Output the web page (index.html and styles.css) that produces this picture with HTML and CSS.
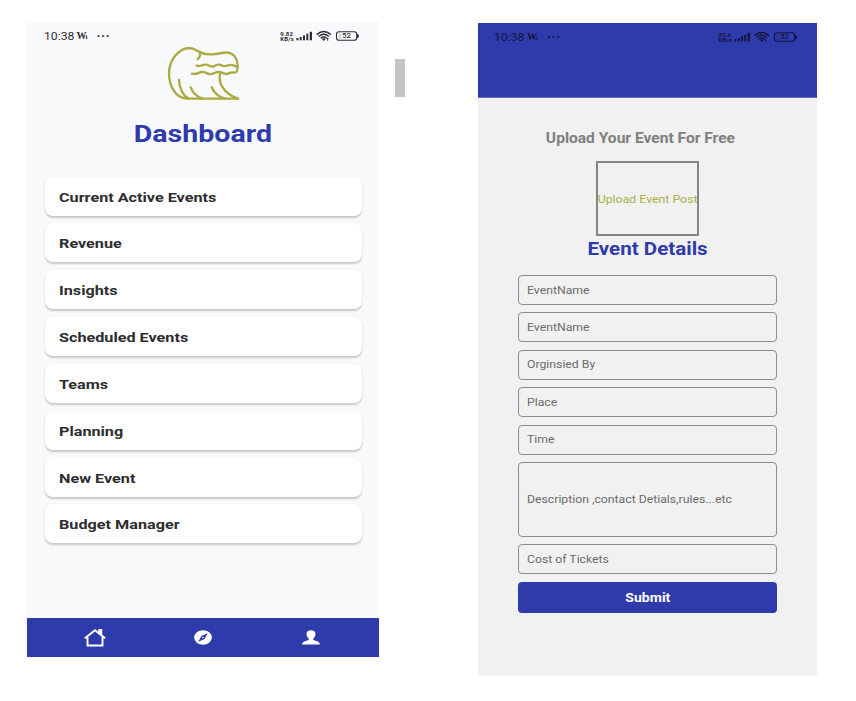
FILE: index.html
```html
<!DOCTYPE html>
<html lang="en">
<head>
<meta charset="utf-8">
<title>Event Manager</title>
<link rel="stylesheet" href="styles.css">
</head>
<body>
<svg class="defs" aria-hidden="true">
  <symbol id="status-icons" viewBox="0 0 62 12">
    <g fill="currentColor">
      <rect x="-.6" y="8" width="2" height="2.300"/><rect x="2.700" y="7" width="2" height="3.300"/><rect x="6" y="5.400" width="2" height="4.900"/><rect x="9.300" y="3.700" width="2" height="6.600"/><rect x="12.700" y="1.800" width="2.300" height="8.500"/>
      <path d="M25 8.900 26.800 11 28.600 8.900Q26.800 7.800 25 8.900ZM29.500 9l1.200-1.300L31.900 9H31.200V10.800H30.200V9ZM60 4.200h.7q1.100 0 1.100.8v2.100q0 .8-1.100.8h-.7z"/>
      <rect x="41.500" y="3" width="2.800" height="6" opacity=".15"/>
    </g>
    <g fill="none" stroke="currentColor" stroke-width="1.450">
      <path d="M19.700 4.600Q26.800-1.700 33.900 4.600M21.700 6.500Q26.800 2.200 31.900 6.500M23.700 8.200Q26.800 5.700 29.900 8.200"/>
    </g>
    <rect x="39.500" y="1.700" width="20.200" height="8.600" rx="2.600" fill="none" stroke="currentColor" stroke-width="1.100"/>
  </symbol>
</svg>
<main class="board">
  <section class="phone dashboard">
    <div class="status">
      <span class="clock">10:38</span><span class="carrier">W<small>i</small></span><span class="dots">···</span>
      <span class="speed">9.82<br>KB/s</span>
      <span class="signals"><svg><use href="#status-icons"/></svg><b>52</b></span>
    </div>
    <svg class="logo" viewBox="0 0 270 210" fill="none" stroke="#adaa42" stroke-width="7" stroke-linecap="round" stroke-linejoin="round">
      <path d="M234 176H80C45 174 27 136 27 98 28 60 55 25 88 24 103 24 110 33 121 37 142 46 165 44 185 39 216 32 232 50 233 78 233 90 231 98 224 98 212 94 208 102 198 102 188 101 184 95 174 96 163 97 159 104 148 102 138 100 135 94 124 96 112 99 108 104 96 101"/>
      <path d="M110 77C120 80 128 73 137 74 148 75 152 82 162 79 171 73 178 72 186 77 199 82 207 72 217 75 223 77 227 80 232 79M180 101C175 125 187 160 234 176M121 37C121 48 118 54 113 58M57 120C58 145 70 168 86 176M92 142C98 158 110 170 128 176M155 142C162 158 172 170 195 176"/>
    </svg>
    <h1><span>Dashboard</span></h1>
    <ul class="menu">
      <li><span>Current Active Events</span></li>
      <li><span>Revenue</span></li>
      <li><span>Insights</span></li>
      <li><span>Scheduled Events</span></li>
      <li><span>Teams</span></li>
      <li><span>Planning</span></li>
      <li><span>New Event</span></li>
      <li><span>Budget Manager</span></li>
    </ul>
    <nav class="tabs">
      <svg viewBox="0 0 22 18" fill="none" stroke="#fff" stroke-width="1.900"><path d="M.8 9.200 11 1.300 21.200 9.200M3.500 8V16.500H18.500V8M15.300 4V1H17.300V6"/></svg>
      <svg viewBox="0 0 22 18"><ellipse cx="11" cy="8.500" rx="8.800" ry="7.300" fill="#fff"/><path d="M15.800 4.300 12.600 9.900 6.200 12.700 9.400 7.100Z" fill="#303bab"/><ellipse cx="11" cy="8.500" rx=".9" ry=".7" fill="#fff"/></svg>
      <svg viewBox="0 0 22 18" fill="#fff"><path d="M11 1.200C13.800 1.200 15.600 2.700 15.500 5 15.400 7.300 14.400 8.700 13.300 9.500V11C14.900 12 19.800 11.900 19.900 15.400H2.100C2.200 11.900 7.100 12 8.700 11V9.500C7.600 8.700 6.600 7.300 6.500 5 6.400 2.700 8.200 1.200 11 1.200Z"/></svg>
    </nav>
  </section>
  <div class="marker"></div>
  <section class="phone upload">
    <header>
      <div class="status">
        <span class="clock">10:38</span><span class="carrier">W<small>i</small></span><span class="dots">···</span>
        <span class="speed">35.0<br>KB/s</span>
        <span class="signals"><svg><use href="#status-icons"/></svg><b>52</b></span>
      </div>
    </header>
    <h2><span>Upload Your Event For Free</span></h2>
    <div class="poster"><span>Upload Event Post</span></div>
    <h3><span>Event Details</span></h3>
    <form class="fields">
      <div class="field"><span>EventName</span></div>
      <div class="field"><span>EventName</span></div>
      <div class="field"><span>Orginsied By</span></div>
      <div class="field"><span>Place</span></div>
      <div class="field"><span>Time</span></div>
      <div class="field tall"><span>Description ,contact Detials,rules...etc</span></div>
      <div class="field"><span>Cost of Tickets</span></div>
      <button type="button"><span>Submit</span></button>
    </form>
  </section>
</main>
</body>
</html>
```
FILE: styles.css
```css
* { box-sizing: border-box; }
body {
  margin: 0;
  background: #fff;
  font-family: Roboto, "Liberation Sans", sans-serif;
}
.defs { display: none; }
.board {
  display: flex;
  align-items: flex-start;
  width: 856px;
  height: 701px;
  padding: 22px 0 0 27px;
}
.phone { display: flex; flex-direction: column; flex: none; }

/* Labels use a widened Roboto */
h1 span, h2 span, h3 span, li span, .poster span, .field span, button span, .clock {
  display: inline-block;
  white-space: nowrap;
  transform: scaleX(var(--stretch, 1.1));
}
li span, .field span, .clock { transform-origin: left; }

.status {
  display: flex;
  align-items: center;
  height: 14px;
  color: #2d2f33;
}
.clock { --stretch: 1.09; width: 33px; padding-top: 1px; font-size: 11.200px; line-height: 14px; }
.carrier { width: 20px; font: bold 10px/12px "Liberation Serif", serif; letter-spacing: -1px; }
.carrier small { font-size: 7px; }
.dots { font-size: 13px; line-height: 14px; font-weight: bold; letter-spacing: .7px; }
.speed { margin-left: auto; font-size: 6px; line-height: 5.500px; font-weight: bold; letter-spacing: .2px; }
.signals { position: relative; width: 62px; height: 12px; margin-left: 3px; }
.signals svg { display: block; width: 62px; height: 12px; overflow: visible; }
.signals b { position: absolute; left: 40px; top: 2px; width: 19px; text-align: center; font-size: 7.500px; line-height: 8px; font-weight: 500; }
symbol { overflow: visible; }

.dashboard { width: 352px; height: 635px; background: #f8f9fb; }
.dashboard .status { margin: 7px 20px 0 16.500px; }
.logo { width: 90px; height: 70px; margin: -3px 0 0 133px; }
h1 {
  --stretch: 1.215;
  margin: 9px 0 0;
  text-align: center;
  font-size: 23.5px;
  line-height: 30px;
  color: #303bab;
}
.menu {
  display: flex;
  flex-direction: column;
  gap: 7.850px;
  margin: 27.500px 17.500px 0;
  padding: 0;
  list-style: none;
}
.menu li {
  --stretch: 1.2;
  height: 39px;
  padding-left: 14px;
  border-radius: 8px;
  background: #fff;
  box-shadow: 0 1.500px 2px rgba(0, 0, 0, .2);
  font-size: 13.500px;
  font-weight: bold;
  line-height: 40px;
  color: #2d2d2f;
}
.tabs {
  display: flex;
  align-items: center;
  justify-content: space-around;
  height: 39px;
  margin-top: auto;
  padding: 0 13.500px;
  background: #303bab;
}
.tabs svg { width: 22px; height: 18px; }

.marker { width: 10px; height: 38px; margin: 37px 0 0 16px; background: #c6c6c6; }

.upload {
  align-items: center;
  width: 339px;
  height: 653px;
  margin: 1px 0 0 73px;
  background: #f1f1f1;
}
.upload header { width: 100%; height: 75px; padding: 7px 20px 0 16px; background: #303bab; border-bottom: 1px solid #5e67bd; }
.upload .status { color: #11143d; }
h2 { --stretch: 1.12; margin: 29.500px 0 0; padding-right: 14px; font-size: 13.900px; line-height: 20px; color: #808080; }
.poster {
  display: flex;
  align-items: center;
  justify-content: center;
  width: 103px;
  height: 75px;
  margin: 13.500px 0 0;
  border: 2px solid #858585;
  font-size: 11.500px;
  color: #adaf48;
}
.poster span { --stretch: 1.07; }
h3 { --stretch: 1.1; margin: 0; font-size: 18.700px; line-height: 26px; color: #303bab; }
.fields { display: flex; flex-direction: column; gap: 7.400px; width: 259px; margin: 13px 0 0; }
.field {
  --stretch: 1.088;
  display: flex;
  align-items: center;
  height: 30px;
  padding-left: 8px;
  border: 1px solid #8e8e8e;
  border-radius: 4px;
  font-size: 11.250px;
  color: #6b6b6b;
}
.field.tall { height: 75px; }
button {
  --stretch: 1.08;
  height: 31px;
  padding: 0;
  border: 0;
  border-radius: 4px;
  background: #303bab;
  font: bold 13px/31px Roboto, sans-serif;
  color: #fff;
}
```
